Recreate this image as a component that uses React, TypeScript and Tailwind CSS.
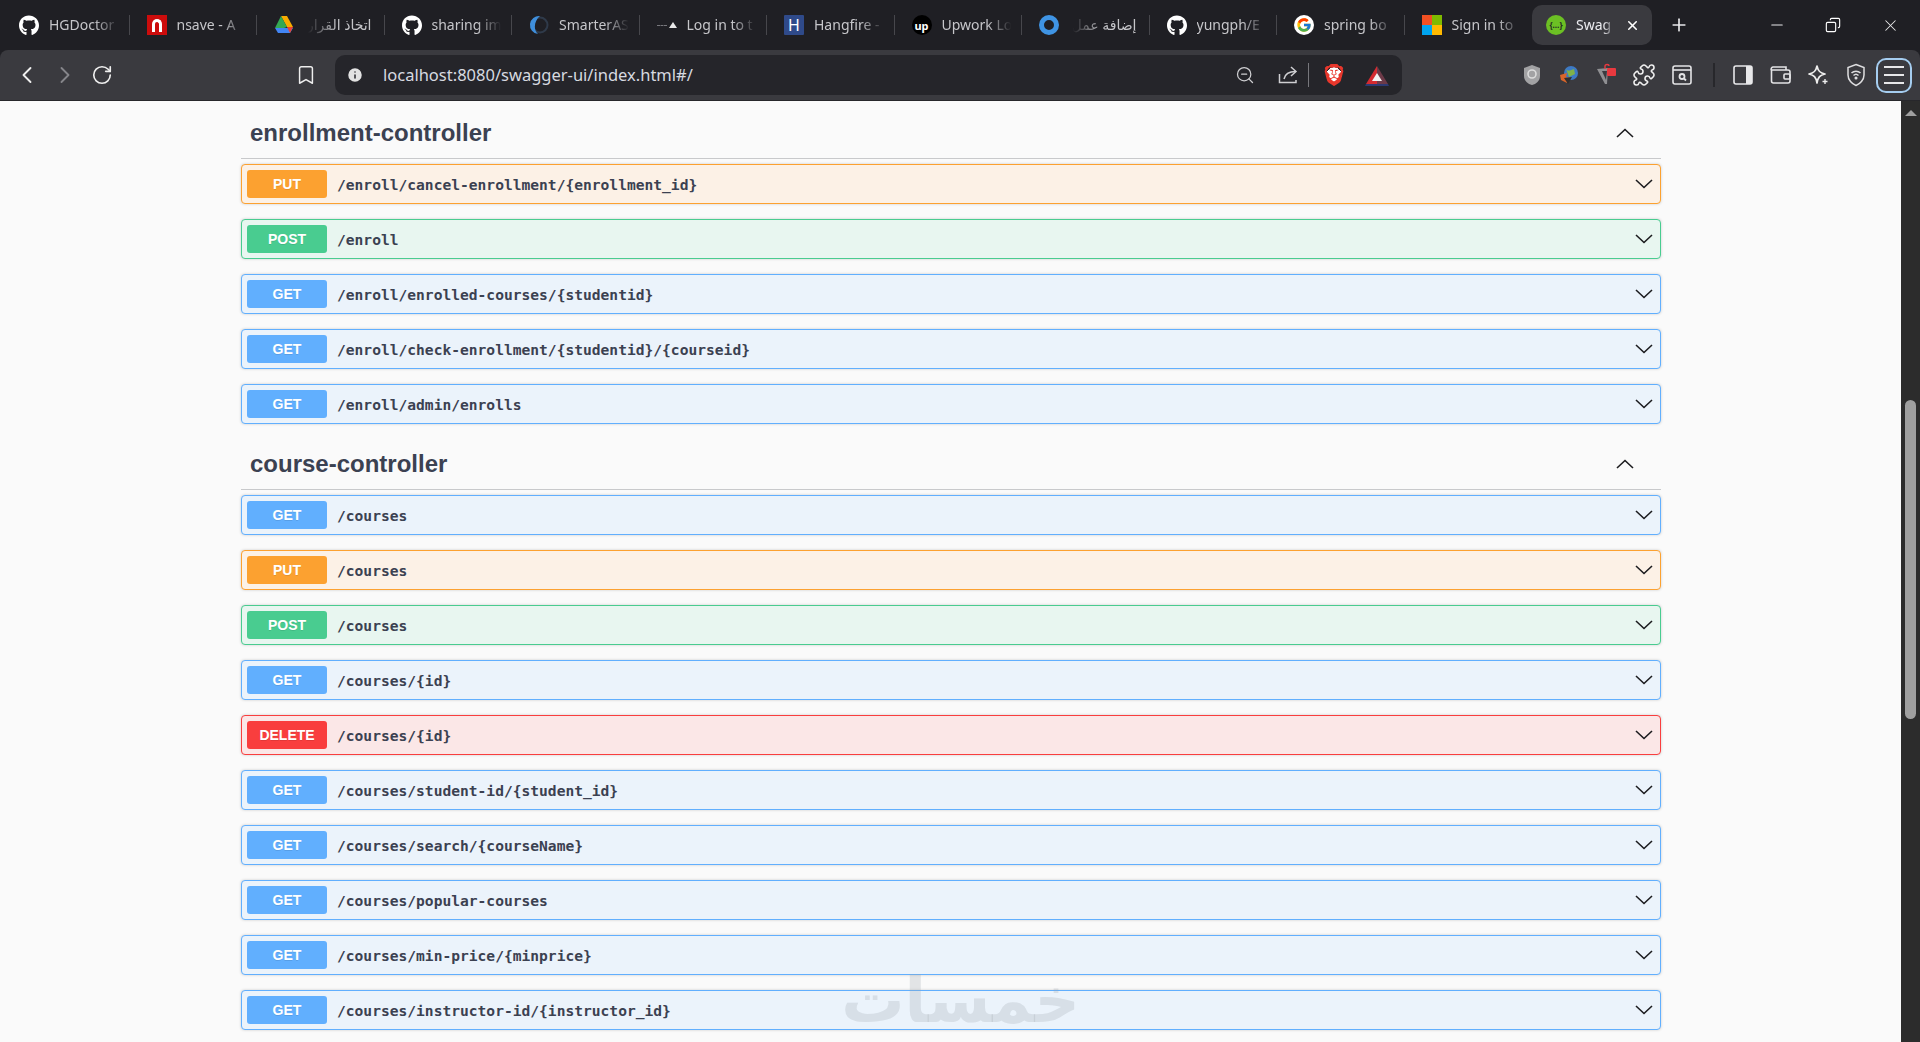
import React from 'react';
import { ChevronLeft, ChevronRight, RotateCw, Bookmark, Info, ZoomOut, Puzzle, X, Plus, Minus, Copy } from 'lucide-react';
import { FaGithub } from 'react-icons/fa';
import { FcGoogle } from 'react-icons/fc';
import { SiBrave } from 'react-icons/si';

type Method = 'GET' | 'PUT' | 'POST' | 'DELETE';

const methodStyles: Record<Method, { row: string; badge: string }> = {
    GET: { row: 'bg-[#ebf3fb] border-[#61affe]', badge: 'bg-[#61affe]' },
    PUT: { row: 'bg-[#fcf1e6] border-[#fca130]', badge: 'bg-[#fca130]' },
    POST: { row: 'bg-[#e8f6f0] border-[#49cc90]', badge: 'bg-[#49cc90]' },
    DELETE: { row: 'bg-[#fbe7e7] border-[#f93e3e]', badge: 'bg-[#f93e3e]' },
};

const enrollmentRoutes: [Method, string][] = [
    ['PUT', '/enroll/cancel-enrollment/{enrollment_id}'],
    ['POST', '/enroll'],
    ['GET', '/enroll/enrolled-courses/{studentid}'],
    ['GET', '/enroll/check-enrollment/{studentid}/{courseid}'],
    ['GET', '/enroll/admin/enrolls'],
];

const courseRoutes: [Method, string][] = [
    ['GET', '/courses'],
    ['PUT', '/courses'],
    ['POST', '/courses'],
    ['GET', '/courses/{id}'],
    ['DELETE', '/courses/{id}'],
    ['GET', '/courses/student-id/{student_id}'],
    ['GET', '/courses/search/{courseName}'],
    ['GET', '/courses/popular-courses'],
    ['GET', '/courses/min-price/{minprice}'],
    ['GET', '/courses/instructor-id/{instructor_id}'],
];

const GitHubIcon = () => <FaGithub size={21} className="text-white" />;

const DriveIcon = () => (
    <svg width="20" height="20" viewBox="0 0 20 20">
        <polygon points="7,1 13,1 19,12 13,12" fill="#f9ab00" />
        <polygon points="7,1 13,12 10,13 1,13" fill="#34a853" />
        <polygon points="1,13 19,13 16,18 4,18" fill="#4285f4" />
        <polygon points="13,12 19,12 16,18" fill="#ea4335" />
    </svg>
);

const tabs: { title: string; icon: React.ReactNode; rtl?: boolean; noSep?: boolean }[] = [
    { title: 'HGDoctor', icon: <GitHubIcon /> },
    { title: 'nsave - A', icon: <div className="w-5 h-5 bg-[#cc0c0c] flex items-center justify-center"><div className="w-[10px] h-[13px] border-[3px] border-b-0 border-white rounded-t-full" /></div> },
    { title: 'اتخاذ القرار', icon: <DriveIcon />, rtl: true },
    { title: 'sharing im', icon: <GitHubIcon /> },
    { title: 'SmarterAS', icon: <svg width="20" height="20" viewBox="0 0 20 20"><circle cx="11" cy="10" r="7.5" fill="none" stroke="#2f3a4a" strokeWidth="2" /><path d="M11 1 A9 9 0 0 0 9 19 C5 16 4 7 11 1Z" fill="#3f8fdc" /></svg> },
    { title: 'Log in to t', icon: <div className="w-5 h-5 flex items-center justify-end gap-[2px]"><div className="w-[10px] border-t border-dashed border-[#77777c]" /><div className="w-0 h-0 border-x-[4px] border-x-transparent border-b-[6px] border-b-[#e8e8e8]" /></div> },
    { title: 'Hangfire -', icon: <div className="w-5 h-5 bg-[#2f4a8a] rounded-[1px] flex items-center justify-center text-white text-[16px] leading-none">H</div> },
    { title: 'Upwork Lo', icon: <div className="w-5 h-5 bg-black rounded-full flex items-center justify-center text-white text-[11px] font-bold leading-none">up</div> },
    { title: 'إضافة عمل', icon: <div className="w-5 h-5 rounded-full border-[5px] border-[#3f94e4]" />, rtl: true },
    { title: 'yungph/E', icon: <GitHubIcon /> },
    { title: 'spring bo', icon: <div className="w-5 h-5 bg-white rounded-full flex items-center justify-center"><FcGoogle size={16} /></div> },
    { title: 'Sign in to', icon: <div className="w-5 h-5 grid grid-cols-2"><div className="bg-[#f25022]" /><div className="bg-[#7fba00]" /><div className="bg-[#00a4ef]" /><div className="bg-[#ffb900]" /></div>, noSep: true },
];

function ChevronIcon({ up }: { up?: boolean }) {
    return (
        <svg width="18" height="10" viewBox="0 0 18 10" fill="none" stroke="#1c1c1f" strokeWidth="1.6">
            <polyline points={up ? '1,9 9,1.5 17,9' : '1,1 9,8.5 17,1'} />
        </svg>
    );
}

function Route({ method, path }: { method: Method; path: string }) {
    const s = methodStyles[method];
    return (
        <div className={`h-10 mb-[15px] flex items-center border rounded-[4px] shadow-[0_0_3px_rgba(0,0,0,0.19)] pl-[5px] pr-[7px] ${s.row}`}>
            <div className={`w-20 h-7 rounded-[3px] flex items-center justify-center text-white text-[14px] font-bold font-['Liberation_Sans',sans-serif] [text-shadow:0_1px_0_rgba(0,0,0,0.1)] ${s.badge}`}>
                {method}
            </div>
            <span className="flex-1 pl-[10px] pt-[1px] text-[14.6px] font-bold text-[#3b4151] font-['DejaVu_Sans_Mono',monospace]">{path}</span>
            <ChevronIcon />
        </div>
    );
}

function Section({ title, routes, headerClass }: { title: string; routes: [Method, string][]; headerClass: string }) {
    return (
        <section>
            <div className={`flex items-center justify-between border-b border-[#c8c9cb] pl-[9px] pr-[27px] mb-[5px] ${headerClass}`}>
                <h3 className="text-[24px] font-bold text-[#3b4151] font-['Liberation_Sans',sans-serif]">{title}</h3>
                <ChevronIcon up />
            </div>
            {routes.map(([method, path], i) => (
                <Route key={i} method={method} path={path} />
            ))}
        </section>
    );
}

function TabStrip() {
    return (
        <div className="h-[50px] bg-[#1f1f24] flex items-center pl-[2px] shrink-0">
            {tabs.map((tab, i) => (
                <div key={i} className="w-[127.5px] h-5 flex items-center pl-[17px] pr-[7px] gap-[10px] shrink-0 relative">
                    <div className="w-5 h-5 flex items-center justify-center shrink-0">{tab.icon}</div>
                    <span
                        dir={tab.rtl ? 'rtl' : undefined}
                        className={`flex-1 overflow-hidden whitespace-nowrap pb-[2px] text-[14px] text-[#c6c6ca] font-['Noto_Sans','DejaVu_Sans',sans-serif] ${tab.rtl ? 'pr-[6px] [mask-image:linear-gradient(to_left,black_55%,transparent_95%)]' : '[mask-image:linear-gradient(to_right,black_62%,transparent_95%)]'}`}
                    >
                        {tab.title}
                    </span>
                    {!tab.noSep && <div className="absolute right-0 top-0 w-px h-5 bg-[#47474c]" />}
                </div>
            ))}
            <div className="w-[120px] h-[40px] bg-[#3a3a3f] rounded-[10px] flex items-center pl-[14px] pr-[12px] gap-[10px] shrink-0">
                <div className="w-5 h-5 rounded-full bg-[#6cc024] flex items-center justify-center text-[#1f1f24] text-[8px] font-bold leading-none">{'{…}'}</div>
                <span className="flex-1 overflow-hidden pb-[2px] text-[14px] text-[#ececf0] font-['Noto_Sans',sans-serif] [mask-image:linear-gradient(to_right,black_70%,transparent)]">Swag</span>
                <X size={15} strokeWidth={2.5} className="text-white" />
            </div>
            <Plus size={20} className="text-[#e8e8ea] ml-[17px]" />
            <Minus size={18} strokeWidth={1.4} className="text-[#e8e8ea] ml-[79px]" />
            <Copy size={16} strokeWidth={1.7} className="text-white ml-[39px] -scale-x-100" />
            <X size={19} strokeWidth={1.3} className="text-[#e8e8ea] ml-[40px]" />
        </div>
    );
}

function ToolIcon({ children }: { children: React.ReactNode }) {
    return <div className="w-[37.5px] flex items-center justify-center shrink-0">{children}</div>;
}

function Toolbar() {
    return (
        <div className="h-[50px] bg-[#3a3a3f] rounded-t-[8px] flex items-center shrink-0">
            <ChevronLeft size={28} strokeWidth={1.6} className="text-[#eeeeee] ml-[13px]" />
            <ChevronRight size={28} strokeWidth={1.6} className="text-[#85858a] ml-[10px]" />
            <RotateCw size={22} strokeWidth={1.8} className="text-[#eeeeee] ml-[12px]" />
            <Bookmark size={22} strokeWidth={1.6} className="text-[#eeeeee] ml-[182px]" />
            <div className="ml-[18px] w-[1067px] h-10 rounded-[10px] bg-[#25252a] flex items-center pl-[11px] pr-[13px]">
                <Info size={18} fill="#e2e2e2" strokeWidth={2} className="text-[#25252a]" />
                <span className="ml-[19px] flex-1 text-[16.5px] text-[#d7dae0] font-['Noto_Sans',sans-serif]">localhost:8080/swagger-ui/index.html#/</span>
                <ZoomOut size={20} strokeWidth={1.5} className="text-[#cfcfd2]" />
                <svg width="20" height="20" viewBox="0 0 20 20" fill="none" stroke="#cfcfd2" strokeWidth="1.5" className="ml-[23px]">
                    <path d="M1.5 9 V17.5 H18 V15" />
                    <path d="M6 14 C7 9 11 6.5 17.5 6.5" />
                    <path d="M13 2 L18 6.5 L13 11" />
                </svg>
                <div className="w-px h-6 bg-[#77777c] ml-[10px]" />
                <div className="ml-[14px] w-[22px] h-[22px] flex items-center justify-center bg-[radial-gradient(circle,white_48%,transparent_50%)]">
                    <SiBrave size={22} className="text-[#e8372c]" />
                </div>
                <svg width="24" height="22" viewBox="0 0 24 22" className="ml-[20px]">
                    <polygon points="12,2 23,20 12,20" fill="#6d3a48" />
                    <polygon points="12,2 12,20 1,20" fill="#d42a30" />
                    <polygon points="12,9 17,17 7,17" fill="#f2f2f2" />
                    <polygon points="1,20 23,20 24,22 0,22" fill="#2d3a73" />
                </svg>
            </div>
            <div className="ml-[111px] flex items-center">
                <ToolIcon>
                    <svg width="18" height="22" viewBox="0 0 18 22"><path d="M9 1 L17 4 V12 C17 17 13 20 9 21 C5 20 1 17 1 12 V4 Z" fill="#a2a2a4" /><circle cx="9" cy="10" r="4" fill="none" stroke="#dcdcdc" strokeWidth="1.6" /></svg>
                </ToolIcon>
                <ToolIcon>
                    <svg width="22" height="22" viewBox="0 0 22 22"><circle cx="13" cy="9" r="7" fill="#3d79c4" /><path d="M8 5 C10 8 13 6 16 5 L17 10 L11 13 Z" fill="#7fb24a" /><path d="M2 11 L9 9 L8 13 L13 14 L9 19 L3 16 Z" fill="#d9652a" /><path d="M6 14 L14 13 L10 20 Z" fill="#2f2f2f" /></svg>
                </ToolIcon>
                <ToolIcon>
                    <svg width="24" height="24" viewBox="0 0 24 24"><path d="M2 6 L13 5 L12 21 L10 21 Z" fill="#8f8f92" /><path d="M7 8 L12 8 L11 17 Z" fill="#3a3a3f" /><rect x="12" y="5" width="9" height="8" rx="1" fill="#e8393f" /><path d="M10 6 V3 C10 1 14 1 14 3" fill="none" stroke="#e8393f" strokeWidth="1.4" /></svg>
                </ToolIcon>
                <ToolIcon><Puzzle size={24} strokeWidth={1.6} className="text-[#eeeeee]" /></ToolIcon>
                <ToolIcon>
                    <svg width="22" height="22" viewBox="0 0 22 22" fill="none" stroke="#e4e4e6" strokeWidth="1.6"><rect x="2" y="2" width="18" height="18" rx="2" /><line x1="2" y1="6" x2="20" y2="6" /><circle cx="11" cy="12.5" r="2.5" strokeWidth="1.8" /><line x1="13" y1="14.5" x2="15" y2="16.5" strokeWidth="1.8" /></svg>
                </ToolIcon>
                <div className="w-[2px] h-6 bg-[#27272b] ml-[12px] mr-[10px]" />
                <ToolIcon>
                    <svg width="22" height="22" viewBox="0 0 22 22"><rect x="2" y="2" width="18" height="18" rx="2" fill="none" stroke="#e8e8ea" strokeWidth="1.6" /><rect x="14" y="2" width="6" height="18" fill="#e8e8ea" /></svg>
                </ToolIcon>
                <ToolIcon>
                    <svg width="22" height="22" viewBox="0 0 22 22" fill="none" stroke="#e4e4e6" strokeWidth="1.6"><path d="M1.5 6 V17 a2 2 0 0 0 2 2 H18 a2 2 0 0 0 2-2 V8 a2 2 0 0 0-2-2 H1.5 Z" /><path d="M1.5 6 a2 2 0 0 1 2-3 H16 V6" /><rect x="14" y="10" width="6" height="5" rx="1" /></svg>
                </ToolIcon>
                <ToolIcon>
                    <svg width="22" height="22" viewBox="0 0 22 22" fill="none" stroke="#eeeeee" strokeWidth="1.7"><path d="M10 2 C11 7 13 9 18 10 C13 11 11 13 10 19 C9 13 7 11 2 10 C7 9 9 7 10 2 Z" strokeLinejoin="round" /><path d="M18 15 V20 M15.5 17.5 H20.5" strokeWidth="1.4" /></svg>
                </ToolIcon>
                <ToolIcon>
                    <svg width="20" height="24" viewBox="0 0 20 24" fill="none" stroke="#dedee0" strokeWidth="1.5"><path d="M10 1.5 L18 4.5 V12 C18 17 14 21 10 22.5 C6 21 2 17 2 12 V4.5 Z" /><path d="M5.5 10 C8 7.5 12 7.5 14.5 10 M7.5 12.5 C9 11 11 11 12.5 12.5" /><circle cx="10" cy="15" r="0.8" fill="#dedee0" /></svg>
                </ToolIcon>
                <div className="w-9 h-[35px] ml-[1px] rounded-[10px] border-2 border-[#a5cdf0] flex flex-col items-center justify-center gap-[6px]">
                    <div className="w-5 h-[2px] bg-[#e8e8ea]" />
                    <div className="w-5 h-[2px] bg-[#e8e8ea]" />
                    <div className="w-5 h-[2px] bg-[#e8e8ea]" />
                </div>
            </div>
        </div>
    );
}

function Scrollbar() {
    return (
        <div className="w-[19px] bg-[#2c2c2c] flex flex-col items-center shrink-0">
            <div className="mt-[9px] w-0 h-0 border-x-[6px] border-x-transparent border-b-[6px] border-b-[#a0a0a0]" />
            <div className="mt-[284px] w-[11px] h-[319px] rounded-full bg-[#9f9f9f]" />
        </div>
    );
}

export default function App() {
    return (
        <div className="h-screen overflow-hidden flex flex-col bg-[#1f1f24] relative">
            <TabStrip />
            <Toolbar />
            <div className="flex-1 flex min-h-0 border-t border-[#27272b]">
                <main className="flex-1 bg-[#fafafa] pl-[241px] pr-[240px] overflow-hidden">
                    <Section title="enrollment-controller" routes={enrollmentRoutes} headerClass="h-[58px] pt-[6px]" />
                    <Section title="course-controller" routes={courseRoutes} headerClass="h-[51px]" />
                </main>
                <Scrollbar />
            </div>
            <div dir="rtl" className="absolute left-[850px] top-[969px] w-[230px] text-center text-[63px] leading-none font-bold text-[#9aa3aa]/25 font-['DejaVu_Sans',sans-serif] pointer-events-none">
                خمسات
            </div>
        </div>
    );
}
